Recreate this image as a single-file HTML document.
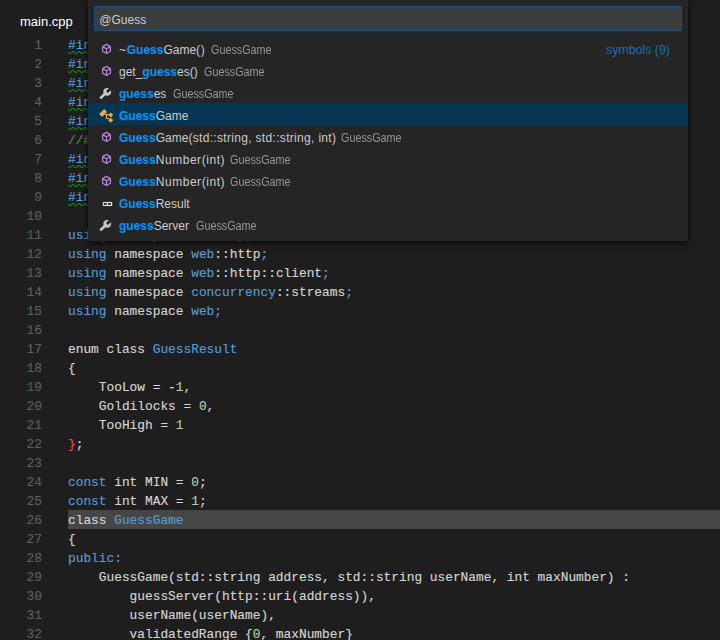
<!DOCTYPE html>
<html><head><meta charset="utf-8">
<style>
*{margin:0;padding:0;box-sizing:border-box}
html,body{width:720px;height:640px;overflow:hidden;background:#1e1e1e}
body{position:relative;font-family:"Liberation Sans",sans-serif}
.tab{position:absolute;left:20px;top:12px;font-size:13px;color:#ffffff;line-height:19px}
.ln{position:absolute;left:0;top:36px;width:42px;text-align:right;font-family:"Liberation Mono",monospace;font-size:12.83px;line-height:19px;color:#5e5e5e;white-space:pre;-webkit-text-stroke:0.15px}
.code{position:absolute;left:68px;top:36px;font-family:"Liberation Mono",monospace;font-size:12.83px;line-height:19px;color:#d4d4d4;-webkit-text-stroke:0.15px}
.code div{height:19px;white-space:pre}
.k{color:#569cd6}.n{color:#b5cea8}.c{color:#608b4e}.r{color:#f44747}
.hl{position:absolute;left:68px;top:510px;width:652px;height:19px;background:#464646}
.sq{position:relative}

.qo{position:absolute;left:88px;top:0;width:600px;height:241px;background:#252526;box-shadow:0 2px 6px rgba(0,0,0,0.85)}
.inp{position:absolute;left:6px;top:6px;width:588px;height:25px;background:#3c3c3c;border:1px solid #135588;color:#cccccc;font-size:12px;line-height:23px;padding-left:4.3px;padding-top:2px}
.row{position:absolute;left:0;width:600px;height:22px;line-height:22px;font-size:12px;color:#cccccc;white-space:pre}
.row.sel{background:#073655}
.row .lbl{position:absolute;left:31px;top:2px}
.h{color:#0097fb;font-weight:bold}
.d{display:inline-block;color:#979797;font-size:12px;margin-left:6.5px;transform:scaleX(0.9);transform-origin:0 50%}
.ic{position:absolute;left:8px;top:2px;width:20px;height:20px}
.grp{position:absolute;right:18px;top:38.5px;line-height:22px;font-size:12.4px;color:#1b6fb2}
</style></head><body>
<div class="tab">main.cpp</div>
<div class="hl"></div>
<div class="ln">1
2
3
4
5
6
7
8
9
10
11
12
13
14
15
16
17
18
19
20
21
22
23
24
25
26
27
28
29
30
31
32
33</div>
<svg style="position:absolute;left:68px;top:0" width="62" height="220"><defs><pattern id="sqp" x="0" y="0" width="6" height="3" patternUnits="userSpaceOnUse"><g fill="#0c8f0c"><polygon points="5.5,0 2.5,3 1.1,3 4.1,0"/><polygon points="4,0 6,2 6,0.6 5.4,0"/><polygon points="0,2 1,3 2.4,3 0,0.6"/></g></pattern></defs><rect x="0" y="0" width="62" height="3" fill="url(#sqp)" transform="translate(0,51)"/><rect x="0" y="0" width="62" height="3" fill="url(#sqp)" transform="translate(0,70)"/><rect x="0" y="0" width="62" height="3" fill="url(#sqp)" transform="translate(0,89)"/><rect x="0" y="0" width="62" height="3" fill="url(#sqp)" transform="translate(0,108)"/><rect x="0" y="0" width="62" height="3" fill="url(#sqp)" transform="translate(0,127)"/><rect x="0" y="0" width="62" height="3" fill="url(#sqp)" transform="translate(0,165)"/><rect x="0" y="0" width="62" height="3" fill="url(#sqp)" transform="translate(0,184)"/><rect x="0" y="0" width="62" height="3" fill="url(#sqp)" transform="translate(0,203)"/></svg>
<div class="code">
<div><span class="k sq">#include</span> &lt;cpprest/http_client.h&gt;</div>
<div><span class="k sq">#include</span> &lt;cpprest/filestream.h&gt;</div>
<div><span class="k sq">#include</span> &lt;cpprest/json.h&gt;</div>
<div><span class="k sq">#include</span> &lt;cpprest/uri.h&gt;</div>
<div><span class="k sq">#include</span> &lt;cpprest/asyncrt_utils.h&gt;</div>
<div><span class="c">//#include &lt;stdafx.h&gt;</span></div>
<div><span class="k sq">#include</span> &lt;iostream&gt;</div>
<div><span class="k sq">#include</span> &lt;string&gt;</div>
<div><span class="k sq">#include</span> &lt;random&gt;</div>
<div></div>
<div><span class="k">using</span> namespace <span class="k">utility</span>;</div>
<div><span class="k">using</span> namespace <span class="k">web</span>::http<span class="k">;</span></div>
<div><span class="k">using</span> namespace <span class="k">web</span>::http::client<span class="k">;</span></div>
<div><span class="k">using</span> namespace <span class="k">concurrency</span>::streams<span class="k">;</span></div>
<div><span class="k">using</span> namespace <span class="k">web;</span></div>
<div></div>
<div>enum class <span class="k">GuessResult</span></div>
<div>{</div>
<div>    TooLow = -<span class="n">1</span>,</div>
<div>    Goldilocks = <span class="n">0</span>,</div>
<div>    TooHigh = <span class="n">1</span></div>
<div><span class="r">}</span>;</div>
<div></div>
<div><span class="k">const</span> int MIN = <span class="n">0</span>;</div>
<div><span class="k">const</span> int MAX = <span class="n">1</span>;</div>
<div>class <span class="k">GuessGame</span></div>
<div>{</div>
<div><span class="k">public:</span></div>
<div>    GuessGame(std::string address, std::string userName, int maxNumber) :</div>
<div>        guessServer(http::uri(address)),</div>
<div>        userName(userName),</div>
<div>        validatedRange {<span class="n">0</span>, maxNumber}</div>
</div>

<svg width="0" height="0" style="position:absolute">
<defs>
<g id="cube" fill="none" stroke="#b180d7" stroke-width="1.3" stroke-linejoin="round"><path d="M10.5 5.4 L14.4 7.6 L14.4 12.3 L10.5 14.5 L6.6 12.3 L6.6 7.6 Z M6.6 7.6 L10.5 9.8 L14.4 7.6 M10.5 9.8 L10.5 14.5"/></g>
<mask id="wm"><rect x="0" y="0" width="20" height="20" fill="#fff"/><path d="M11 9 L16.5 3.5" stroke="#000" stroke-width="2.7"/></mask>
<g id="wrench" fill="#c5c5c5"><circle cx="11.2" cy="8.8" r="3.9" mask="url(#wm)"/><path d="M4.9 14.7 L9.6 10.2" stroke="#c5c5c5" stroke-width="2.6" stroke-linecap="round"/></g>
<g id="cls" fill="#e8ab53"><rect x="-3.5" y="-2" width="7" height="4" transform="translate(7.1,8) rotate(-45)"/><rect x="-1.75" y="-1.75" width="3.5" height="3.5" transform="translate(14.8,10) rotate(45)"/><rect x="-1.75" y="-1.75" width="3.5" height="3.5" transform="translate(14.7,15.2) rotate(45)"/><path d="M9 9.5 H13 M10.5 9.5 V13.5 H13" fill="none" stroke="#e8ab53" stroke-width="1.2"/></g>
<g id="enum"><rect x="6.8" y="8.9" width="9.4" height="4.2" fill="#d8d8d8"/><rect x="7.9" y="10" width="2.8" height="1.8" fill="#252526"/><rect x="12.1" y="10" width="2.8" height="1.8" fill="#252526"/></g>
</defs></svg>
<div class="qo">
  <div class="inp">@Guess</div>
  <div class="grp">symbols (9)</div>
  <div class="row" style="top:37px"><svg class="ic" viewBox="0 0 20 20"><use href="#cube"/></svg><span class="lbl"><span style="letter-spacing:0.7px">~</span><span class="h">Guess</span>Game<span style="letter-spacing:0.7px">()</span><span class="d" style="margin-left:5.5px">GuessGame</span></span></div>
  <div class="row" style="top:59px"><svg class="ic" viewBox="0 0 20 20"><use href="#cube"/></svg><span class="lbl">get_<span class="h">guess</span>es()<span class="d">GuessGame</span></span></div>
  <div class="row" style="top:81px"><svg class="ic" viewBox="0 0 20 20"><use href="#wrench"/></svg><span class="lbl"><span class="h">guess</span>es<span class="d">GuessGame</span></span></div>
  <div class="row sel" style="top:103px"><svg class="ic" viewBox="0 0 20 20"><use href="#cls"/></svg><span class="lbl"><span class="h">Guess</span>Game</span></div>
  <div class="row" style="top:125px"><svg class="ic" viewBox="0 0 20 20"><use href="#cube"/></svg><span class="lbl"><span class="h">Guess</span>Game<span style="letter-spacing:0.32px">(std::string, std::string, int)</span><span class="d" style="margin-left:4.5px">GuessGame</span></span></div>
  <div class="row" style="top:147px"><svg class="ic" viewBox="0 0 20 20"><use href="#cube"/></svg><span class="lbl"><span class="h">Guess</span><span style="letter-spacing:0.55px">Number(int)</span><span class="d" style="margin-left:4.5px">GuessGame</span></span></div>
  <div class="row" style="top:169px"><svg class="ic" viewBox="0 0 20 20"><use href="#cube"/></svg><span class="lbl"><span class="h">Guess</span><span style="letter-spacing:0.55px">Number(int)</span><span class="d" style="margin-left:4.5px">GuessGame</span></span></div>
  <div class="row" style="top:191px"><svg class="ic" viewBox="0 0 20 20"><use href="#enum"/></svg><span class="lbl"><span class="h">Guess</span>Result</span></div>
  <div class="row" style="top:213px"><svg class="ic" viewBox="0 0 20 20"><use href="#wrench"/></svg><span class="lbl"><span class="h">guess</span>Server<span class="d">GuessGame</span></span></div>
</div>
</body></html>
